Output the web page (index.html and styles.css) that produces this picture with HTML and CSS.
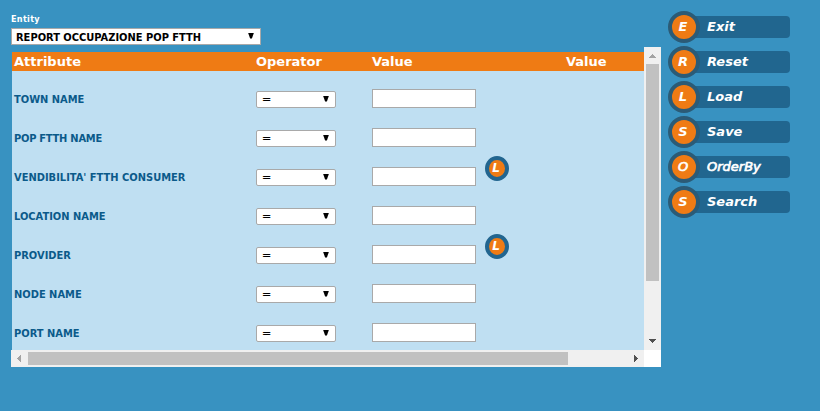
FILE: index.html
```html
<!DOCTYPE html>
<html lang="it">
<head>
<meta charset="utf-8">
<title>Report</title>
<link rel="stylesheet" href="styles.css">
</head>
<body>
<div class="page">
  <main class="main">
    <div class="entity-label">Entity</div>
    <div class="entity-select"><span>REPORT OCCUPAZIONE POP FTTH</span><i class="arrow"></i></div>
    <section class="panel">
      <div class="table">
        <div class="row head"><span>Attribute</span><span>Operator</span><span>Value</span><span></span><span>Value</span></div>
        <div class="row"><span class="name">TOWN NAME</span><div class="op"><span>=</span><i class="arrow"></i></div><input class="field" aria-label="Value"></div>
        <div class="row"><span class="name tight">POP FTTH NAME</span><div class="op"><span>=</span><i class="arrow"></i></div><input class="field" aria-label="Value"></div>
        <div class="row"><span class="name">VENDIBILITA' FTTH CONSUMER</span><div class="op"><span>=</span><i class="arrow"></i></div><input class="field" aria-label="Value"><b class="lookup"><span>L</span></b></div>
        <div class="row"><span class="name">LOCATION NAME</span><div class="op"><span>=</span><i class="arrow"></i></div><input class="field" aria-label="Value"></div>
        <div class="row"><span class="name">PROVIDER</span><div class="op"><span>=</span><i class="arrow"></i></div><input class="field" aria-label="Value"><b class="lookup"><span>L</span></b></div>
        <div class="row"><span class="name">NODE NAME</span><div class="op"><span>=</span><i class="arrow"></i></div><input class="field" aria-label="Value"></div>
        <div class="row"><span class="name">PORT NAME</span><div class="op"><span>=</span><i class="arrow"></i></div><input class="field" aria-label="Value"></div>
      </div>
      <div class="vbar">
        <svg width="17" height="17"><path d="M8 7h1v1h1v1h1v1h1v1H5v-1h1V9h1V8h1z" fill="#a3a3a3"/></svg>
        <div class="vthumb"></div>
        <svg width="17" height="17"><path d="M5 6h7v1h-1v1h-1v1H9v1H8V9H7V8H6V7H5z" fill="#505050"/></svg>
      </div>
      <div class="hbar">
        <svg width="17" height="17"><path d="M6 8h1V7h1V6h1V5h1v7H9v-1H8v-1H7V9H6z" fill="#a3a3a3"/></svg>
        <div class="hthumb"></div>
        <svg width="17" height="17"><path d="M7 5h1v1h1v1h1v1h1v1h-1v1H9v1H8v1H7z" fill="#505050"/></svg>
      </div>
      <div class="corner"></div>
    </section>
  </main>
  <nav class="actions">
    <a class="action"><b class="key">E</b><span class="bar">Exit</span></a>
    <a class="action"><b class="key">R</b><span class="bar">Reset</span></a>
    <a class="action"><b class="key">L</b><span class="bar">Load</span></a>
    <a class="action"><b class="key">S</b><span class="bar">Save</span></a>
    <a class="action thin"><b class="key">O</b><span class="bar">OrderBy</span></a>
    <a class="action"><b class="key">S</b><span class="bar">Search</span></a>
  </nav>
</div>
</body>
</html>
```
FILE: styles.css
```css
* { box-sizing: border-box; }
body { margin: 0; background: #3892c1; font-family: "DejaVu Sans", Verdana, sans-serif; overflow: hidden; }
.page { display: flex; width: 820px; height: 411px; padding-left: 11px; }
.main { width: 650px; padding-top: 13px; }
.entity-label { height: 15px; color: #fff; font-size: 9px; line-height: 12px; font-weight: bold; font-stretch: condensed; letter-spacing: .3px; }
.entity-select { display: flex; justify-content: space-between; align-items: center; width: 250px; height: 17px; padding: 0 6px 0 4px; background: #fff; border: 1px solid #a9a9a9; color: #000; font-size: 11px; line-height: 15px; font-weight: bold; font-stretch: condensed; }
.entity-select span { padding-top: 2px; }
.arrow { width: 6px; height: 6px; margin-top: -2px; background: #000; clip-path: polygon(0 0, 100% 0, 65% 100%, 35% 100%); }
.panel { display: grid; grid-template-columns: 633px 17px; grid-template-rows: 303px 17px; margin-top: 2px; }
.table { margin: 5px 0 0 1px; background: #bfdff2; overflow: hidden; }
.row { display: grid; grid-template-columns: 242px 116px 113px 81px 80px; height: 39px; padding-left: 2px; align-items: center; }
.head { height: 19px; margin-bottom: 8px; background: #ef7b14; color: #fff; font-size: 13px; line-height: 19px; font-weight: bold; }
.name { padding-top: 2px; color: #0b5a8a; font-size: 11px; font-weight: bold; font-stretch: condensed; white-space: nowrap; }
.tight { letter-spacing: -.25px; }
.op { display: flex; justify-content: space-between; align-items: center; width: 80px; height: 17px; margin-top: 2px; padding: 0 6px 0 5px; background: #fff; border: 1px solid #a9a9a9; border-radius: 2px; font-size: 11px; line-height: 15px; }
.op span { -webkit-text-stroke: .2px #000; }
.field { display: block; width: 104px; height: 19px; margin: 0; padding: 0; background: #fff; border: 1px solid #a9a9a9; border-radius: 0; }
.lookup { display: flex; justify-content: center; align-items: center; width: 24px; height: 25px; margin-top: -16px; border: 4px solid #22658f; border-radius: 50%; background: #ef7b14; color: #fff; font-size: 12px; line-height: 16px; font-style: italic; }
.lookup span { margin: -2px 2px 0 0; }
.vbar { display: flex; flex-direction: column; background: #f0f0f0; }
.vthumb { width: 13px; height: 217px; margin: 0 2px auto; background: #c1c1c1; }
.hbar { display: flex; background: #f0f0f0; }
.hthumb { width: 540px; height: 13px; margin: 2px auto 2px 0; background: #c1c1c1; }
.corner { background: #fff; }
.actions { width: 129px; padding: 11px 0 0 7px; }
.action { display: flex; align-items: center; height: 32px; margin-bottom: 3px; color: #fff; font-size: 13px; font-weight: bold; font-style: italic; }
.key { display: flex; justify-content: center; align-items: center; width: 32px; height: 32px; flex: none; padding-right: 2px; border: 4px solid #2b5b76; border-radius: 50%; background: #ef7b14; line-height: 20px; z-index: 1; }
.bar { width: 106px; height: 22px; margin-left: -16px; padding-left: 23px; border-radius: 0 4px 4px 0; background: #21668f; line-height: 22px; }
.thin { font-weight: normal; -webkit-text-stroke: .7px #fff; }
.thin .key { font-weight: normal; }
```
